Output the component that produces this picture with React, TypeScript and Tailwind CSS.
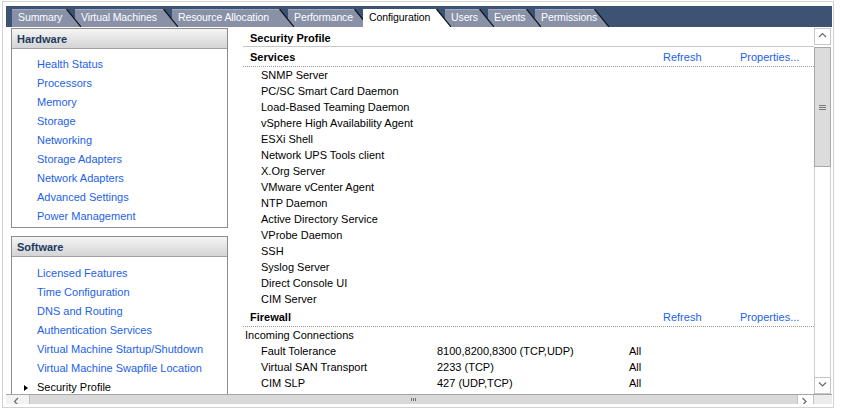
import React from 'react'

const tabs = [
  { label: 'Summary', body: 'w-[54px]', z: 'z-[8]' },
  { label: 'Virtual Machines', body: 'w-[88px]', z: 'z-[7]' },
  { label: 'Resource Allocation', body: 'w-[107px]', z: 'z-[6]' },
  { label: 'Performance', body: 'w-[66px]', z: 'z-[5]' },
  { label: 'Configuration', body: 'w-[73px]', z: 'z-[10]', active: true },
  { label: 'Users', body: 'w-[34px]', z: 'z-[3]' },
  { label: 'Events', body: 'w-[38px]', z: 'z-[2]' },
  { label: 'Permissions', body: 'w-[59px]', z: 'z-[1]' },
]

const hardware = [
  'Health Status',
  'Processors',
  'Memory',
  'Storage',
  'Networking',
  'Storage Adapters',
  'Network Adapters',
  'Advanced Settings',
  'Power Management',
]

const software = [
  'Licensed Features',
  'Time Configuration',
  'DNS and Routing',
  'Authentication Services',
  'Virtual Machine Startup/Shutdown',
  'Virtual Machine Swapfile Location',
]

const services = [
  'SNMP Server',
  'PC/SC Smart Card Daemon',
  'Load-Based Teaming Daemon',
  'vSphere High Availability Agent',
  'ESXi Shell',
  'Network UPS Tools client',
  'X.Org Server',
  'VMware vCenter Agent',
  'NTP Daemon',
  'Active Directory Service',
  'VProbe Daemon',
  'SSH',
  'Syslog Server',
  'Direct Console UI',
  'CIM Server',
]

const incoming = [
  ['Fault Tolerance', '8100,8200,8300 (TCP,UDP)', 'All'],
  ['Virtual SAN Transport', '2233 (TCP)', 'All'],
  ['CIM SLP', '427 (UDP,TCP)', 'All'],
  ['DHCPv6', '546 (TCP,UDP)', 'All'],
]

function Tab({ label, body, z, active }: { label: string; body: string; z: string; active?: boolean }) {
  const fill = active ? '#ffffff' : '#8891a7'
  return (
    <div className={`relative flex h-[18px] flex-none -mr-[6px] ${z}`}>
      <div
        className={`${body} ${
          active ? 'bg-white text-black' : 'bg-[#8891a7] text-white border-t border-[#a3abbd]'
        }`}
      />
      <svg width="15" height="18" className="block flex-none">
        <polygon points="0,0 15,18 0,18" fill={fill} />
        {!active && <line x1="0" y1="0.5" x2="1" y2="0.5" stroke="#a3abbd" />}
        <line x1="0.5" y1="0" x2="15" y2="18" stroke="#101418" strokeWidth="1.2" />
      </svg>
      <span
        className={`absolute left-[6px] top-0 h-full flex items-center whitespace-nowrap text-[10.5px] tracking-[-0.1px] ${
          active ? 'text-black' : 'text-white'
        }`}
      >
        {label}
      </span>
    </div>
  )
}

function PanelBox({ title, items, children, tall }: { title: string; items: string[]; children?: React.ReactNode; tall?: boolean }) {
  return (
    <div className={`w-[217px] border border-[#8c8c8c] bg-white ${tall ? 'h-[200px] flex-none' : ''}`}>
      <div className="h-[20px] border-b border-[#a2a2a2] bg-gradient-to-b from-[#f5f5f5] to-[#d4d4d4] pl-[5px] pt-px flex items-center font-bold text-[#1b3a60]">
        {title}
      </div>
      <div className={`${tall ? 'pt-[7px]' : 'pt-[6px]'} pb-px pl-[25px]`}>
        {items.map((s) => (
          <div key={s} className="leading-[19px] text-[#1d62e6] whitespace-nowrap">
            {s}
          </div>
        ))}
        {children}
      </div>
    </div>
  )
}

function SectionHeader({ title, dotted, first }: { title: string; dotted?: boolean; first?: boolean }) {
  return (
    <div
      className={`h-[20px] flex items-center border-b ${first ? 'pt-[3px]' : 'pt-px'} ${
        dotted ? 'border-dotted border-[#9a9a9a]' : 'border-[#c8c8c8]'
      }`}
    >
      <span className="w-[420px] pl-[7px] font-bold">{title}</span>
      {dotted && (
        <>
          <span className="w-[77px] text-[#1d62e6]">Refresh</span>
          <span className="text-[#1d62e6]">Properties...</span>
        </>
      )}
    </div>
  )
}

function Chevron({ dir }: { dir: 'up' | 'down' | 'left' | 'right' }) {
  const pts = {
    up: '1,5 4.5,1.5 8,5',
    down: '1,1.5 4.5,5 8,1.5',
    left: '5,1 1.5,4.5 5,8',
    right: '1.5,1 5,4.5 1.5,8',
  }[dir]
  return (
    <svg width="9" height="9" className="block">
      <polyline points={pts} fill="none" stroke="#6a6a6a" strokeWidth="1.2" />
    </svg>
  )
}

export default function App() {
  return (
    <div className="w-[842px] h-[411px] bg-white pt-px pl-[2px] font-['Liberation_Sans',Arial,sans-serif] text-[11px] text-black overflow-hidden">
      <div className="w-[832px] h-[407px] border border-[#d2d2d2] pl-[3px] pt-[4px]">
        <div className="w-[826px] h-[398px] flex flex-col">
          {/* tab strip */}
          <div className="h-[21px] flex-none bg-[#3d5373] flex items-end pl-[6px]">
            {tabs.map((t) => (
              <Tab key={t.label} {...t} />
            ))}
          </div>

          {/* body */}
          <div className="h-[367px] flex-none flex bg-white">
            <div className="w-[808px] flex-none flex overflow-hidden">
              <div className="w-[237px] flex-none pl-[5px] pt-px flex flex-col gap-[8px]">
                <PanelBox title="Hardware" items={hardware} />
                <PanelBox title="Software" items={software} tall>
                  <div className="relative leading-[19px] whitespace-nowrap">
                    <svg width="4" height="6" className="absolute -left-[13px] top-[7px]">
                      <polygon points="0,0 4,3 0,6" fill="#000" />
                    </svg>
                    Security Profile
                  </div>
                </PanelBox>
              </div>

              <div className="w-[571px] flex-none">
                <SectionHeader title="Security Profile" first />
                <SectionHeader title="Services" dotted />
                <div className="pl-[18px]">
                  {services.map((s) => (
                    <div key={s} className="leading-[16px] whitespace-nowrap">
                      {s}
                    </div>
                  ))}
                </div>
                <SectionHeader title="Firewall" dotted />
                <div className="pl-[2px] leading-[16px]">Incoming Connections</div>
                {incoming.map(([name, ports, scope]) => (
                  <div key={name} className="flex leading-[16px] whitespace-nowrap pl-[18px]">
                    <span className="w-[176px]">{name}</span>
                    <span className="w-[192px]">{ports}</span>
                    <span>{scope}</span>
                  </div>
                ))}
              </div>
            </div>

            {/* vertical scrollbar */}
            <div className="w-[18px] flex-none flex flex-col pt-px pr-px">
              <div className="h-[17px] border border-[#c6c6c6] bg-white flex items-center justify-center">
                <Chevron dir="up" />
              </div>
              <div className="mt-[2px] h-[120px] border border-[#a8a8a8] bg-[#dcdcdc] flex flex-col items-center justify-center gap-[1px]">
                <div className="w-[7px] h-px bg-[#7a7a7a]" />
                <div className="w-[7px] h-px bg-[#7a7a7a]" />
                <div className="w-[7px] h-px bg-[#7a7a7a]" />
              </div>
              <div className="flex-1 border-l border-r border-[#d0d0d0] bg-white" />
              <div className="h-[17px] border border-[#c6c6c6] bg-white flex items-center justify-center">
                <Chevron dir="down" />
              </div>
            </div>
          </div>

          {/* horizontal scrollbar */}
          <div className="h-[10px] flex-none flex border-t border-[#a4a4a4] overflow-hidden">
            <div className="w-[24px] flex-none border-r border-[#c0c0c0] bg-[#f2f2f2] flex justify-center pt-[2px]">
              <Chevron dir="left" />
            </div>
            <div className="w-[767px] flex-none bg-[#d9d9d9] flex items-center justify-center gap-[1px]">
              <div className="w-px h-[3px] bg-[#6e6e6e]" />
              <div className="w-px h-[3px] bg-[#6e6e6e]" />
              <div className="w-px h-[3px] bg-[#6e6e6e]" />
            </div>
            <div className="w-[17px] flex-none border-l border-r border-[#c0c0c0] bg-white flex justify-center pt-[2px]">
              <Chevron dir="right" />
            </div>
            <div className="flex-1 bg-[#ececec]" />
          </div>
        </div>
      </div>
    </div>
  )
}
